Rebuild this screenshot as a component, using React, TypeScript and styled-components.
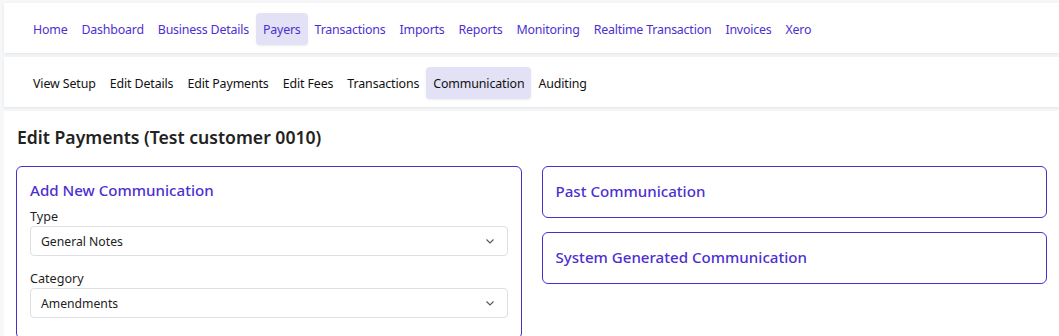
import styled, { createGlobalStyle } from 'styled-components';

const GlobalStyle = createGlobalStyle`
  body {
    margin: 0;
    background: #f6f7f9;
    font-family: 'Noto Sans', 'Open Sans', sans-serif;
    color: #1f1f1f;
  }
`;

const Page = styled.div`
  padding: 3px 0 0 4px;
  display: flex;
  flex-direction: column;
  gap: 4px;
`;

const NavBar = styled.nav`
  height: 50px;
  box-sizing: border-box;
  padding: 2px 0 0 22px;
  background: #fff;
  box-shadow: 0 1px 3px rgba(0, 0, 0, 0.08);
  display: flex;
  align-items: center;
`;

const NavLink = styled.a<{ active?: boolean; muted?: boolean }>`
  height: 32px;
  display: flex;
  align-items: center;
  padding: 0 7px;
  border-radius: 4px;
  font-size: 12.4px;
  letter-spacing: ${(props) => (props.muted ? '-0.12px' : '-0.2px')};
  color: ${(props) => (props.muted ? '#111' : '#4d2fd1')};
  background: ${(props) => (props.active ? '#e2e1f6' : 'transparent')};
  box-shadow: ${(props) => (props.active ? '0 1px 2px rgba(0,0,0,0.08)' : 'none')};
  cursor: pointer;
`;

const Main = styled.main`
  background: #fff;
  padding: 13px 12px 24px;
  min-height: 240px;
`;

const Title = styled.h1`
  margin: 0 0 16px 1px;
  font-size: 17.6px;
  font-weight: 600;
  color: #222;
  line-height: 26px;
`;

const Columns = styled.div`
  display: grid;
  grid-template-columns: 1fr 1fr;
  gap: 20px;
  align-items: start;
`;

const Stack = styled.div`
  display: flex;
  flex-direction: column;
  gap: 14px;
`;

const Card = styled.section<{ compact?: boolean }>`
  border: 1px solid #4a2fcf;
  border-radius: 6px;
  padding: ${(props) => (props.compact ? '12px 13px 14px' : '11px 13px 20px')};
`;

const CardTitle = styled.h2`
  margin: 0;
  font-size: 15.1px;
  font-weight: 500;
  color: #4d2fd1;
  line-height: 24px;
`;

const Field = styled.div`
  display: flex;
  flex-direction: column;
  margin-top: 6px;

  & + & {
    margin-top: 14px;
  }
`;

const Label = styled.label`
  font-size: 12.6px;
  line-height: 18px;
  color: #1f1f1f;
`;

const Select = styled.div`
  height: 28px;
  border: 1px solid #dedfe3;
  border-radius: 4px;
  display: flex;
  align-items: center;
  justify-content: space-between;
  padding: 0 12px 0 10px;
  font-size: 12.2px;
  color: #222;
`;

const Chevron = () => (
  <svg width="10" height="10" viewBox="0 0 10 10">
    <path d="M1.5 3.5 L5 7 L8.5 3.5" fill="none" stroke="#555" strokeWidth="1.1" />
  </svg>
);

const topLinks = [
  'Home',
  'Dashboard',
  'Business Details',
  'Payers',
  'Transactions',
  'Imports',
  'Reports',
  'Monitoring',
  'Realtime Transaction',
  'Invoices',
  'Xero',
];

const subLinks = [
  'View Setup',
  'Edit Details',
  'Edit Payments',
  'Edit Fees',
  'Transactions',
  'Communication',
  'Auditing',
];

export default function App() {
  return (
    <>
      <GlobalStyle />
      <Page>
        <NavBar>
          {topLinks.map((l) => (
            <NavLink key={l} active={l === 'Payers'}>
              {l}
            </NavLink>
          ))}
        </NavBar>
        <NavBar>
          {subLinks.map((l) => (
            <NavLink key={l} muted active={l === 'Communication'}>
              {l}
            </NavLink>
          ))}
        </NavBar>
        <Main>
          <Title>Edit Payments (Test customer 0010)</Title>
          <Columns>
            <Card>
              <CardTitle>Add New Communication</CardTitle>
              <Field>
                <Label>Type</Label>
                <Select>
                  General Notes
                  <Chevron />
                </Select>
              </Field>
              <Field>
                <Label>Category</Label>
                <Select>
                  Amendments
                  <Chevron />
                </Select>
              </Field>
            </Card>
            <Stack>
              <Card compact>
                <CardTitle>Past Communication</CardTitle>
              </Card>
              <Card compact>
                <CardTitle>System Generated Communication</CardTitle>
              </Card>
            </Stack>
          </Columns>
        </Main>
      </Page>
    </>
  );
}
